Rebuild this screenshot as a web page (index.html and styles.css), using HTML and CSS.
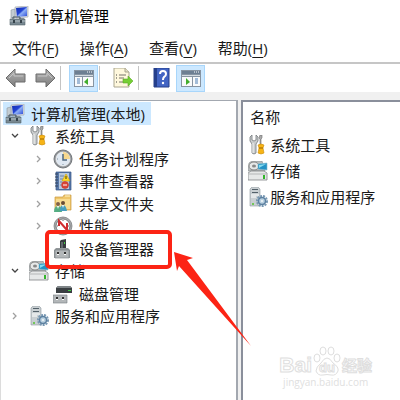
FILE: index.html
```html
<!DOCTYPE html>
<html lang="zh-CN">
<head>
    <meta charset="UTF-8">
    <meta name="viewport" content="width=device-width, initial-scale=1.0">
    <title>计算机管理</title>
    <link rel="stylesheet" href="styles.css">
</head>
<body>
    <!-- Shared icons -->
    <svg class="sprites" aria-hidden="true">
        <defs>
            <linearGradient id="arrowGrey" x1="0" y1="0" x2="0" y2="1">
                <stop offset="0" stop-color="#b5b5b5"/>
                <stop offset="1" stop-color="#7c7c7c"/>
            </linearGradient>
            <linearGradient id="screen" x1="0" y1="0" x2="1" y2="1">
                <stop offset="0" stop-color="#1230b0"/>
                <stop offset="0.45" stop-color="#2343d4"/>
                <stop offset="0.55" stop-color="#8fb0f5"/>
                <stop offset="1" stop-color="#2a4ad8"/>
            </linearGradient>
        </defs>
        <symbol id="computer" viewBox="0 0 20 20">
            <path d="M2 4l4-1v9H2z" fill="#c3ccd2" stroke="#8b969d" stroke-width=".6"/>
            <path d="M6 1l13-1v11l-12 1z" fill="#d9dde2" stroke="#a8adb4" stroke-width=".7"/>
            <path d="M7 2l11-1v9L8 11z" fill="url(#screen)"/>
            <path d="M10 12h5v2h-5z" fill="#98a2a8"/>
            <path d="M4 11h7v3H4z" fill="none" stroke="#45525b"/>
            <path d="M1 13h15v6H1z" fill="#788891" stroke="#56646d" stroke-width=".6"/>
            <path d="M1 15h15" stroke="#b5c0c6"/>
            <path d="M4 14h2v3H4zM11 14h2v3h-2z" fill="#35424a"/>
        </symbol>
        <symbol id="tools" viewBox="0 0 20 20">
            <path d="M4 0L2 2v4l2 3v9q2 2 4 0V9l2-3V2L8 0v5L6 6 4 5z" fill="#c9cccd" stroke="#74797c" stroke-width=".8"/>
            <path d="M5 8v10" stroke="#f5f5f5"/>
            <path d="M12 0h2v3l-1 1v6h-1V4l-1-1z" fill="#aaa" stroke="#6e6e6e" stroke-width=".6"/>
            <path d="M10 10q3-2 6 0l-1 3 1 5q-3 2-6 0l1-5z" fill="#f7b416" stroke="#c98b0b" stroke-width=".6"/>
            <path d="M11 13h4" stroke="#9a6500"/>
        </symbol>
        <symbol id="clock" viewBox="0 0 20 20">
            <circle cx="10" cy="10" r="9" fill="#909498" stroke="#74787c" stroke-width="1"/>
            <circle cx="10" cy="10" r="7" fill="#dfe8f2" stroke="#f5f5f5" stroke-width=".7"/>
            <path d="M10 3a7 7 0 0 1 7 7h-7z" fill="#f7d88d"/>
            <path d="M10 5v6h4" fill="none" stroke="#50687f" stroke-width="1.500"/>
            <path d="M10 16v-1M4 10h1" stroke="#8292a0"/>
        </symbol>
        <symbol id="events" viewBox="0 0 20 20">
            <path d="M3 1h15v18H3z" fill="#5878a9" stroke="#365786" stroke-width=".7"/>
            <path d="M6 2h10v16H6z" fill="#b9c9dd"/>
            <path d="M7 5h4M7 8h3M7 11h2M7 14h1" stroke="#6c84a8"/>
            <path d="M2 3h3M2 6h3M2 9h3M2 12h3M2 15h3" stroke="#33435a"/>
            <path d="M13 3l4 7H9z" fill="#ffdc2b" stroke="#d09d00" stroke-width=".6"/>
            <path d="M13 5v3" stroke="#443800"/>
            <circle cx="12" cy="14" r="3.500" fill="#d94538" stroke="#b92c24" stroke-width=".5"/>
            <path d="M10 14h4" stroke="#fff"/>
        </symbol>
        <symbol id="share" viewBox="0 0 20 20">
            <path d="M2 3h8l1-2h7v15H2z" fill="#efc66b" stroke="#c99a40" stroke-width=".7"/>
            <path d="M3 5h14v10H3z" fill="#f8dc91"/>
            <path d="M12 2h5" stroke="#fff5c8"/>
            <circle cx="5" cy="10" r="2" fill="#806047"/>
            <circle cx="10" cy="9" r="2" fill="#6a4c35"/>
            <path d="M1 18q0-6 4-6t4 6z" fill="#55ad83"/>
            <path d="M7 17q0-6 3-6t4 6z" fill="#469ebd"/>
            <path d="M4 12l1 3 1-3M9 11l1 3 1-3" fill="#fff"/>
        </symbol>
        <symbol id="performance" viewBox="0 0 20 20">
            <circle cx="10" cy="10" r="9" fill="#a8aaac" stroke="#7d8082" stroke-width=".8"/>
            <circle cx="10" cy="10" r="7" fill="#fff" stroke="#66696b" stroke-width=".8"/>
            <path d="M6 10V5l8 9V7" fill="none" stroke="#d02d30" stroke-width="2"/>
            <path d="M4 10h1M15 10h1M10 4v1" stroke="#666"/>
        </symbol>
        <symbol id="device" viewBox="0 0 20 20">
            <path d="M8 1l5-1v11H7V2z" fill="#353b3e"/>
            <path d="M8 3h2v7H8z" fill="#60686c"/>
            <path d="M11 3h1v2h-1z" fill="#45ca45"/>
            <path d="M1 11l2-2h12l2 2v8H1z" fill="#92979a"/>
            <path d="M2 11h14v8H2z" fill="#b3b7b9" stroke="#777c80" stroke-width=".6"/>
            <path d="M4 13h2v2H4zM11 13h2v2h-2z" fill="#333"/>
            <path d="M4 15h2v1H4zM11 15h2v1h-2z" fill="#fff"/>
        </symbol>
        <symbol id="storage" viewBox="0 0 20 20">
            <path d="M0 10l1-8 3-2h10l3 10z" fill="#b8bdbe" stroke="#85898b" stroke-width=".6"/>
            <ellipse cx="6" cy="5" rx="5" ry="4" fill="#e6e8e8" stroke="#888"/>
            <ellipse cx="6" cy="5" rx="2" ry="1.500" fill="#888"/>
            <path d="M10 3l9-1v7l-9-1z" fill="#2492c5" stroke="#83b9cb" stroke-width=".6"/>
            <path d="M11 4l7-1-7 4z" fill="#86dbee"/>
            <path d="M0 12l3-2h13l3 2v7H0z" fill="#e6e8e8" stroke="#808486" stroke-width=".8"/>
            <path d="M1 13h17" stroke="#b4b6b7"/>
            <path d="M15 14h2v4h-2z" fill="#32b52a"/>
        </symbol>
        <symbol id="disk" viewBox="0 0 20 20">
            <path d="M3 4l2-2h12l2 2v5H3z" fill="#3a3f42"/>
            <path d="M3 4l2-2h12l2 2z" fill="#7f8588"/>
            <path d="M15 6h3v1h-3z" fill="#42d342"/>
            <path d="M0 11h14v8H0z" fill="#b3b7b9" stroke="#777c80" stroke-width=".6"/>
            <path d="M3 13h2v2H3zM9 13h2v2H9z" fill="#333"/>
            <path d="M3 15h2v1H3zM9 15h2v1H9z" fill="#fff"/>
        </symbol>
        <symbol id="services" viewBox="0 0 20 20">
            <path d="M2 2l2-2h6l2 2v17H2z" fill="#c9cfd2" stroke="#8e989e" stroke-width=".6"/>
            <path d="M4 2h6v1H4zM4 5h6v1H4z" fill="#536069"/>
            <path d="M3 8h8M3 10h5" stroke="#fff"/>
            <path d="M4 16h2v2H4z" fill="#72c758"/>
            <circle cx="14" cy="14" r="5" fill="none" stroke="#7898b3" stroke-width="2" stroke-dasharray="2 1"/>
            <circle cx="14" cy="14" r="3.500" fill="#b9d0e0" stroke="#5c80a0" stroke-width="1.500"/>
            <circle cx="14" cy="14" r="1" fill="#f3f7f9"/>
        </symbol>
        <symbol id="open" viewBox="0 0 8 8">
            <path d="M1 2l3 3 3-3" fill="none" stroke="#444" stroke-width="1.300"/>
        </symbol>
        <symbol id="closed" viewBox="0 0 8 8">
            <path d="M2 1l3 3-3 3" fill="none" stroke="#a0a0a0" stroke-width="1.300"/>
        </symbol>
    </svg>

    <div class="window">
        <header class="titlebar">
            <svg class="icon"><use href="#computer"/></svg>
            <h1>计算机管理</h1>
        </header>

        <nav class="menubar">
            <button>文件(<u>F</u>)</button>
            <button>操作(<u>A</u>)</button>
            <button>查看(<u>V</u>)</button>
            <button>帮助(<u>H</u>)</button>
        </nav>

        <div class="toolbar">
            <button class="tool" aria-label="后退">
                <svg class="icon" viewBox="0 0 20 20"><path d="M0 10l9-9v5h10v8H9v5z" fill="url(#arrowGrey)" stroke="#6c6c6c"/><path d="M3 10l5-5v3h9" fill="none" stroke="#c4c4c4"/></svg>
            </button>
            <button class="tool" aria-label="前进">
                <svg class="icon" viewBox="0 0 20 20"><path d="M20 10l-9-9v5H1v8h10v5z" fill="url(#arrowGrey)" stroke="#6c6c6c"/><path d="M17 10l-5-5v3H3" fill="none" stroke="#c4c4c4"/></svg>
            </button>
            <span class="separator"></span>
            <button class="tool pressed" aria-label="显示/隐藏控制台树">
                <svg class="icon" viewBox="0 0 20 20"><path d="M0 2h20v17H0z" fill="#8794a2"/><path d="M1 3h18v3H1z" fill="#6d7f92"/><path d="M13 4h1M15 4h1M17 4h1" stroke="#fff"/><path d="M1 7h18v1H1z" fill="#d5dce2"/><path d="M1 9h7v9H1zM9 9h10v9H9z" fill="#f9fafb"/><path d="M3 11h3M3 13h3M3 15h3" stroke="#4d7fb5"/><path d="M14 10v7l-4-3z" fill="#42ad2d"/></svg>
            </button>
            <span class="separator"></span>
            <button class="tool" aria-label="导出列表">
                <svg class="icon" viewBox="0 0 20 20"><path d="M1 0h11l4 4v15H1z" fill="#fff8dd" stroke="#aaa68f"/><path d="M12 0v4h4" fill="#e5dfc5" stroke="#aaa68f"/><path d="M6 7h7M6 10h5M6 14h6" stroke="#77736b"/><path d="M3 7h1M3 10h1M3 14h1" stroke="#444"/><path d="M10 11h5V8l5 5-5 5v-3h-5z" fill="#75cf34" stroke="#5ca927" stroke-width=".6"/></svg>
            </button>
            <span class="separator"></span>
            <button class="tool" aria-label="帮助">
                <svg class="icon" viewBox="0 0 20 20"><path d="M2 0h15v19H2z" fill="#4264c3" stroke="#243f8b"/><path d="M2 0h3v19H2z" fill="#253f8b"/><path d="M8 6q0-3 3-3t3 3q0 2-2 3-1 1-1 3" fill="none" stroke="#fff" stroke-width="2"/><circle cx="11" cy="15" r="1.200" fill="#fff"/></svg>
            </button>
            <button class="tool pressed" aria-label="显示/隐藏操作窗格">
                <svg class="icon" viewBox="0 0 20 20"><path d="M0 2h20v17H0z" fill="#8794a2"/><path d="M1 3h18v3H1z" fill="#6d7f92"/><path d="M13 4h1M15 4h1M17 4h1" stroke="#fff"/><path d="M1 7h18v1H1z" fill="#d5dce2"/><path d="M1 9h10v9H1zM12 9h7v9h-7z" fill="#f9fafb"/><path d="M14 11h3M14 13h3M14 15h3" stroke="#4d7fb5"/><path d="M5 10v7l4-3z" fill="#42ad2d"/></svg>
            </button>
        </div>

        <main class="panes">
            <section class="pane">
                <ul class="tree">
                    <li class="node root"><span class="selected"><svg class="icon"><use href="#computer"/></svg>计算机管理(本地)</span></li>
                    <li class="node"><button class="toggle" aria-label="折叠"><svg><use href="#open"/></svg></button><svg class="icon"><use href="#tools"/></svg>系统工具</li>
                    <li class="node child"><button class="toggle" aria-label="展开"><svg><use href="#closed"/></svg></button><svg class="icon"><use href="#clock"/></svg>任务计划程序</li>
                    <li class="node child"><button class="toggle" aria-label="展开"><svg><use href="#closed"/></svg></button><svg class="icon"><use href="#events"/></svg>事件查看器</li>
                    <li class="node child"><button class="toggle" aria-label="展开"><svg><use href="#closed"/></svg></button><svg class="icon"><use href="#share"/></svg>共享文件夹</li>
                    <li class="node child"><button class="toggle" aria-label="展开"><svg><use href="#closed"/></svg></button><svg class="icon"><use href="#performance"/></svg>性能</li>
                    <li class="node child marked">
                        <span class="toggle"></span><svg class="icon"><use href="#device"/></svg>设备管理器
                        <span class="highlight"></span>
                        <svg class="pointer" viewBox="0 0 80 96"><path d="M1 1l19 6-6 2 64 86L6 15l-2 5z" fill="#fc2415"/></svg>
                    </li>
                    <li class="node"><button class="toggle" aria-label="折叠"><svg><use href="#open"/></svg></button><svg class="icon"><use href="#storage"/></svg>存储</li>
                    <li class="node child"><span class="toggle"></span><svg class="icon"><use href="#disk"/></svg>磁盘管理</li>
                    <li class="node"><button class="toggle" aria-label="展开"><svg><use href="#closed"/></svg></button><svg class="icon"><use href="#services"/></svg>服务和应用程序</li>
                </ul>
            </section>

            <section class="pane details">
                <h2>名称</h2>
                <ul>
                    <li><svg class="icon"><use href="#tools"/></svg>系统工具</li>
                    <li><svg class="icon"><use href="#storage"/></svg>存储</li>
                    <li><svg class="icon"><use href="#services"/></svg>服务和应用程序</li>
                </ul>
            </section>
        </main>

        <div class="watermark">
            <div class="brand">
                <span>Bai</span>
                <span class="paw">
                    <svg viewBox="0 0 28 30"><g fill="#fff" stroke="#dedede"><ellipse cx="4" cy="12" rx="3" ry="4"/><ellipse cx="10" cy="5" rx="3" ry="4"/><ellipse cx="18" cy="5" rx="3" ry="4"/><ellipse cx="24" cy="12" rx="3" ry="4"/><path d="M14 12q3 0 6 5 6 4 5 8-2 5-7 4-4-1-8 0-5 1-7-4 0-4 5-8 3-5 6-5z"/></g></svg>
                    <span class="du">du</span>
                </span>
                <span class="cn">经验</span>
            </div>
            <div class="site">jingyan.baidu.com</div>
        </div>
    </div>
</body>
</html>
```
FILE: styles.css
```css
* {
    box-sizing: border-box;
}

body {
    margin: 0;
    font-family: "Open Sans", "Noto Sans CJK SC", sans-serif;
    font-size: 15px;
    line-height: 22px;
    color: #1a1a1a;
    background-color: #fff;
}

ul {
    list-style: none;
    margin: 0;
    padding: 0;
}

h1,
h2 {
    margin: 0;
    font-size: 15px;
    font-weight: normal;
}

button {
    padding: 0;
    border: none;
    background: none;
    font: inherit;
    color: inherit;
}

.sprites {
    position: absolute;
    width: 0;
    height: 0;
}

.icon {
    width: 20px;
    height: 20px;
    flex: none;
}

.window {
    position: relative;
    display: flex;
    flex-direction: column;
    min-height: 100vh;
    overflow: hidden;
}

.titlebar {
    display: flex;
    align-items: center;
    gap: 5px;
    height: 32px;
    padding-left: 9px;
    color: #000;
}

/* Menu and toolbar */
.menubar {
    display: flex;
    align-items: center;
    gap: 21px;
    height: 32px;
    padding: 2px 0 0 12px;
    border-bottom: 2px solid #c6c6c6;
}

.menubar u {
    text-underline-offset: 3px;
}

.toolbar {
    display: flex;
    align-items: center;
    height: 28px;
    padding-left: 1px;
}

.tool {
    display: flex;
    align-items: center;
    justify-content: center;
    width: 29px;
    height: 27px;
}

.tool.pressed {
    background-color: #cce8ff;
    border: 1px solid #a8d6fb;
}

.separator {
    width: 1px;
    height: 24px;
    margin: 0 8px 0 1px;
    background-color: #c4c4c4;
}

/* Panes */
.panes {
    flex: 1;
    display: grid;
    grid-template-columns: 3fr 2fr;
    gap: 3px;
    padding-top: 8px;
    background-color: #f0f0f0;
}

.pane {
    min-width: 0;
    padding: 1px 0 0 2px;
    background-color: #fff;
    border: solid #a3a8b0;
    border-width: 1px 2px 0 1px;
    border-left-color: #dcdcdc;
}

.tree {
    display: grid;
    grid-auto-rows: 23px 22px;
}

.node {
    display: flex;
    align-items: center;
    white-space: nowrap;
}

.node .icon {
    margin: 0 6px 0 2px;
}

.child {
    padding-left: 24px;
}

.selected {
    display: flex;
    align-items: center;
    height: 23px;
    padding-right: 6px;
    background-color: #cce8ff;
}

.toggle {
    display: flex;
    align-items: center;
    justify-content: center;
    width: 24px;
    height: 22px;
}

.toggle svg {
    width: 8px;
    height: 8px;
}

.marked {
    position: relative;
}

.highlight {
    position: absolute;
    top: -7px;
    left: 42px;
    width: 127px;
    height: 39px;
    border: 4px solid #fc2415;
    border-radius: 5px;
}

.pointer {
    position: absolute;
    top: 14px;
    left: 170px;
    width: 80px;
    height: 96px;
}

.details {
    padding: 4px 0 0 5px;
    border-width: 2px 0 0 2px;
    border-color: #8a8f9b;
}

.details h2 {
    padding-left: 2px;
    margin-bottom: 4px;
}

.details li {
    display: flex;
    align-items: center;
    gap: 2px;
    height: 26px;
    white-space: nowrap;
}

/* Watermark */
.watermark {
    position: absolute;
    right: 28px;
    bottom: 12px;
    color: #fff;
    -webkit-text-stroke: 1px #dedede;
}

.brand {
    display: flex;
    align-items: flex-end;
    gap: 1px;
    height: 30px;
    font-family: "Liberation Sans", sans-serif;
    font-size: 21px;
    font-weight: bold;
}

.paw {
    position: relative;
    width: 28px;
    height: 30px;
}

.paw svg {
    width: 28px;
    height: 30px;
}

.du {
    position: absolute;
    left: 6px;
    bottom: 0;
    font-size: 13px;
    line-height: 16px;
}

.cn {
    font-family: "Noto Sans CJK SC", sans-serif;
    font-size: 15px;
}

.site {
    font-size: 10px;
    line-height: 12px;
    text-align: center;
    color: #e0e0e0;
    -webkit-text-stroke: 0;
}
```
